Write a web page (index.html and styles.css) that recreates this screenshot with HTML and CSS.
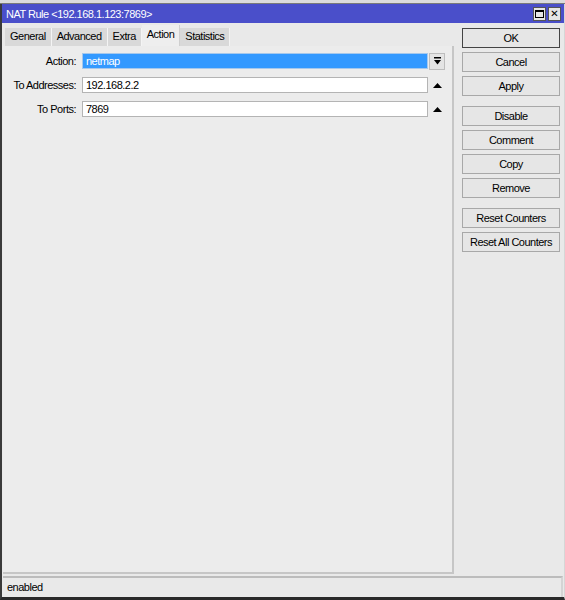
FILE: index.html
```html
<!DOCTYPE html>
<html lang="en">
<head>
    <meta charset="UTF-8">
    <title>NAT Rule</title>
    <link rel="stylesheet" href="styles.css">
</head>
<body>
    <div class="top-strip"></div>
    <div class="window">
        <!-- Title bar -->
        <div class="titlebar">
            <span class="title">NAT Rule &lt;192.168.1.123:7869&gt;</span>
            <div class="title-btns">
                <span class="tbtn"><span class="max-box"></span></span>
                <span class="tbtn close">&#x2715;</span>
            </div>
        </div>

        <div class="main">
            <!-- Left side: tabs + form -->
            <div class="left">
                <div class="tabs">
                    <span class="tab">General</span>
                    <span class="tab">Advanced</span>
                    <span class="tab">Extra</span>
                    <span class="tab active">Action</span>
                    <span class="tab">Statistics</span>
                </div>
                <div class="panel">
                    <div class="row">
                        <label>Action:</label>
                        <div class="field selected">netmap</div>
                        <span class="drop-btn">
                            <svg width="7" height="8" viewBox="0 0 7 8"><rect x="0" y="0" width="7" height="1.5" fill="#000"/><path d="M0 3 H7 L3.5 7.5 Z" fill="#000"/></svg>
                        </span>
                    </div>
                    <div class="row">
                        <label>To Addresses:</label>
                        <div class="field">192.168.2.2</div>
                        <span class="up-btn">
                            <svg width="9" height="5" viewBox="0 0 9 5"><path d="M4.5 0 L9 5 H0 Z" fill="#000"/></svg>
                        </span>
                    </div>
                    <div class="row">
                        <label>To Ports:</label>
                        <div class="field">7869</div>
                        <span class="up-btn">
                            <svg width="9" height="5" viewBox="0 0 9 5"><path d="M4.5 0 L9 5 H0 Z" fill="#000"/></svg>
                        </span>
                    </div>
                </div>
            </div>

            <!-- Right side: buttons -->
            <div class="buttons">
                <div class="btn-group">
                    <button class="btn default">OK</button>
                    <button class="btn">Cancel</button>
                    <button class="btn">Apply</button>
                </div>
                <div class="btn-group">
                    <button class="btn">Disable</button>
                    <button class="btn">Comment</button>
                    <button class="btn">Copy</button>
                    <button class="btn">Remove</button>
                </div>
                <div class="btn-group">
                    <button class="btn">Reset Counters</button>
                    <button class="btn">Reset All Counters</button>
                </div>
            </div>
        </div>

        <!-- Status bar -->
        <div class="statusbar">enabled</div>
    </div>
</body>
</html>
```

FILE: styles.css
```css
* {
    box-sizing: border-box;
    margin: 0;
    padding: 0;
}

body {
    font-family: Tahoma, "Liberation Sans", "DejaVu Sans", sans-serif;
    font-size: 11px;
    letter-spacing: -0.5px;
    color: #000;
    background: #e6e6e6;
    width: 565px;
    height: 600px;
    overflow: hidden;
}

.top-strip {
    height: 4px;
    background: #dcdcdc;
    border-bottom: 1px solid #7a7a7a;
}

.window {
    height: 596px;
    display: flex;
    flex-direction: column;
    background: #e9e9e9;
    border-left: 2px solid #3a3a3a;
    border-right: 1px solid #d6d6d6;
    border-bottom: 3px solid #2a2a2a;
}

.titlebar {
    height: 19px;
    background: #4a4fca;
    color: #fff;
    display: flex;
    align-items: center;
    justify-content: space-between;
    padding: 0 3px 0 4px;
}

.title-btns {
    display: flex;
    gap: 2px;
    letter-spacing: 0;
}

.tbtn {
    width: 13px;
    height: 14px;
    background: #e6e6e6;
    border: 1px solid #555;
    display: flex;
    align-items: center;
    justify-content: center;
    color: #000;
    font-size: 10px;
    font-weight: bold;
    line-height: 1;
}

.max-box {
    width: 9px;
    height: 8px;
    border: 1px solid #000;
    border-top-width: 2px;
}

.main {
    flex: 1;
    display: flex;
    padding: 5px 0 0 1px;
}

.left {
    width: 451px;
    display: flex;
    flex-direction: column;
}

.tabs {
    display: flex;
    align-items: flex-end;
    padding-left: 2px;
    height: 18px;
}

.tab {
    height: 18px;
    line-height: 17px;
    padding: 0 5px;
    background: #d9d9d9;
    border-right: 1px solid #f4f4f4;
}

.tab.active {
    height: 21px;
    line-height: 19px;
    background: #eeeeee;
    padding: 0 5px;
    border-right: 1px solid #cfcfcf;
}

.panel {
    flex: 1;
    background: #ececec;
    border-right: 2px solid #c6c6c6;
    border-bottom: 2px solid #c6c6c6;
    padding-top: 7px;
    display: flex;
    flex-direction: column;
    gap: 8px;
}

.row {
    display: flex;
    align-items: center;
    height: 16px;
}

.row label {
    width: 73px;
    text-align: right;
    margin-right: 6px;
}

.field {
    width: 346px;
    height: 16px;
    line-height: 14px;
    padding-left: 3px;
    background: #fff;
    border: 1px solid #b4b4b4;
}

.field.selected {
    background: #3399ff;
    color: #fff;
    border-color: #a6c8ec;
}

.drop-btn {
    width: 16px;
    height: 17px;
    margin-left: 1px;
    background: #e4e4e4;
    border: 1px solid #bdbdbd;
    display: flex;
    align-items: center;
    justify-content: center;
}

.up-btn {
    width: 17px;
    height: 16px;
    display: flex;
    align-items: center;
    justify-content: center;
    margin-left: 1px;
}

.buttons {
    margin-left: 8px;
    width: 98px;
    display: flex;
    flex-direction: column;
    gap: 10px;
}

.btn-group {
    display: flex;
    flex-direction: column;
    gap: 4px;
}

.btn {
    height: 20px;
    font-family: inherit;
    font-size: 11px;
    letter-spacing: -0.5px;
    background: #e6e6e6;
    border: 1px solid #a8a8a8;
    color: #000;
}

.btn.default {
    border-color: #444;
}

.statusbar {
    height: 21px;
    margin: 2px 1px 0 1px;
    border-top: 2px solid #bcbcbc;
    border-right: 2px solid #d4d4d4;
    padding-left: 4px;
    line-height: 18px;
    background: #e9e9e9;
}
```
